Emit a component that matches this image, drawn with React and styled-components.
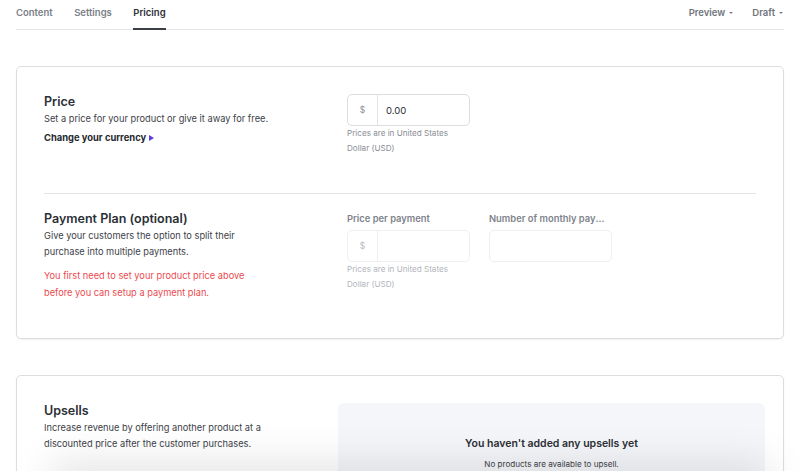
import React from "react";
import styled, { createGlobalStyle } from "styled-components";

const Global = createGlobalStyle`
  html, body { margin: 0; padding: 0; background: #fff; }
  body { font-family: Inter, "Noto Sans", Arial, sans-serif; color: #2b2f36; -webkit-font-smoothing: antialiased; }
  * { box-sizing: border-box; }
`;

const Page = styled.div`
  padding: 0 16px 60px;
`;

const TopBar = styled.div`
  display: flex;
  justify-content: space-between;
  align-items: stretch;
  height: 30px;
  border-bottom: 1px solid #e4e5e8;
`;

const Tabs = styled.div`
  display: flex;
  gap: 21.5px;
`;

const Tab = styled.div`
  font-size: 9.5px;
  font-weight: 600;
  color: ${(p) => (p.$active ? "#2b2f36" : "#7b8089")};
  padding-top: 7px;
  border-bottom: 2px solid ${(p) => (p.$active ? "#3a3e45" : "transparent")};
  margin-bottom: -1px;
`;

const Menus = styled.div`
  display: flex;
  gap: 19px;
  padding-right: 1px;
`;

const Menu = styled.div`
  display: flex;
  align-items: flex-start;
  gap: 4px;
  font-size: 9.5px;
  font-weight: 600;
  color: #6f747d;
  padding-top: 7px;
`;

const Caret = styled.span`
  width: 0;
  height: 0;
  margin-top: 5px;
  border-left: 2px solid transparent;
  border-right: 2px solid transparent;
  border-top: 2px solid #7b8089;
`;

const Card = styled.section`
  margin-top: ${(p) => p.$mt}px;
  border: 1px solid #dcdde1;
  border-radius: 5px;
  box-shadow: 0 1px 2px rgba(0, 0, 0, 0.06);
  padding: 0 27px;
  background: #fff;
`;

const Section = styled.div`
  display: grid;
  grid-template-columns: 230px 1fr;
  column-gap: 73px;
  padding: ${(p) => p.$pad};
  border-bottom: ${(p) => (p.$divider ? "1px solid #e4e5e8" : "none")};
`;

const Left = styled.div`
  display: flex;
  flex-direction: column;
  max-width: ${(p) => p.$max || 230}px;
`;

const Fields = styled.div`
  display: flex;
  gap: 19px;
  align-items: flex-start;
`;

const Heading = styled.h2`
  margin: 0;
  font-size: 12.5px;
  font-weight: 600;
  line-height: 16px;
  color: #2b2f36;
`;

const Desc = styled.p`
  margin: 1px 0 0;
  font-size: 9.25px;
  line-height: 16px;
  color: #3d4148;
  white-space: ${(p) => (p.$nowrap ? "nowrap" : "normal")};
`;

const Warning = styled.p`
  margin: 8px 0 0;
  font-size: 9.25px;
  line-height: 16.5px;
  color: #ec4a4f;
`;

const CurrencyLink = styled.a`
  margin-top: 4px;
  display: flex;
  align-items: center;
  gap: 3px;
  font-size: 9.4px;
  font-weight: 700;
  line-height: 14px;
  color: #25282e;
`;

const Tri = styled.span`
  width: 0;
  height: 0;
  border-top: 3.5px solid transparent;
  border-bottom: 3.5px solid transparent;
  border-left: 5px solid #5b3de0;
`;

const Field = styled.div`
  display: flex;
  flex-direction: column;
  width: 123px;
`;

const Label = styled.div`
  font-size: 9.4px;
  font-weight: 600;
  color: #7e838b;
  line-height: 16px;
  margin-bottom: 3px;
  white-space: nowrap;
  overflow: hidden;
  text-overflow: ellipsis;
`;

const InputBox = styled.div`
  display: flex;
  height: 32px;
  width: 123px;
  border: 1px solid ${(p) => (p.$disabled ? "#eeeff1" : "#dcdde1")};
  border-radius: 5px;
  background: #fff;
  overflow: hidden;
`;

const Prefix = styled.div`
  width: 30px;
  display: flex;
  align-items: center;
  justify-content: center;
  border-right: 1px solid ${(p) => (p.$disabled ? "#eeeff1" : "#e2e3e6")};
  font-size: 8.5px;
  color: ${(p) => (p.$disabled ? "#b8bbc1" : "#8a8e95")};
`;

const Value = styled.div`
  display: flex;
  align-items: center;
  padding-left: 8px;
  font-size: 9.5px;
  color: #2b2f36;
`;

const Help = styled.div`
  margin-top: 0px;
  font-size: 8.1px;
  line-height: 15px;
  color: ${(p) => (p.$disabled ? "#b3b6bc" : "#8a8e95")};
  width: 118px;
`;

const UpsellGrid = styled.div`
  display: grid;
  grid-template-columns: 230px 1fr;
  column-gap: 64px;
  padding: 27px 0 40px;
  margin-right: -9px;
`;

const Empty = styled.div`
  background: #f5f6f9;
  border-radius: 6px;
  height: 120px;
  display: flex;
  flex-direction: column;
  align-items: center;
  padding-top: 34px;
`;

const EmptyTitle = styled.div`
  font-size: 10.5px;
  font-weight: 600;
  color: #2b2f36;
  line-height: 14px;
`;

const EmptyText = styled.div`
  margin-top: 7px;
  font-size: 8.1px;
  color: #3d4148;
  line-height: 12px;
`;

const BottomShade = styled.div`
  position: fixed;
  left: 60px;
  right: 40px;
  bottom: -40px;
  height: 40px;
  background: #fff;
  box-shadow: 0 0 40px 10px rgba(0, 0, 0, 0.1);
`;

export default function App() {
  return (
    <>
      <Global />
      <Page>
        <TopBar>
          <Tabs>
            <Tab>Content</Tab>
            <Tab>Settings</Tab>
            <Tab $active>Pricing</Tab>
          </Tabs>
          <Menus>
            <Menu>Preview <Caret /></Menu>
            <Menu>Draft <Caret /></Menu>
          </Menus>
        </TopBar>

        <Card $mt={36}>
          <Section $pad="27px 0 37px" $divider>
            <Left>
              <Heading>Price</Heading>
              <Desc $nowrap>Set a price for your product or give it away for free.</Desc>
              <CurrencyLink>Change your currency <Tri /></CurrencyLink>
            </Left>
            <Fields>
              <Field>
                <InputBox>
                  <Prefix>$</Prefix>
                  <Value>0.00</Value>
                </InputBox>
                <Help>Prices are in United States Dollar (USD)</Help>
              </Field>
            </Fields>
          </Section>
          <Section $pad="17px 0 37px">
            <Left $max={224}>
              <Heading>Payment Plan (optional)</Heading>
              <Desc>Give your customers the option to split their purchase into multiple payments.</Desc>
              <Warning>You first need to set your product price above before you can setup a payment plan.</Warning>
            </Left>
            <Fields>
              <Field>
                <Label>Price per payment</Label>
                <InputBox $disabled>
                  <Prefix $disabled>$</Prefix>
                </InputBox>
                <Help $disabled>Prices are in United States Dollar (USD)</Help>
              </Field>
              <Field>
                <Label>Number of monthly payments</Label>
                <InputBox $disabled />
              </Field>
            </Fields>
          </Section>
        </Card>

        <Card $mt={36}>
          <UpsellGrid>
            <Left $max={224}>
              <Heading>Upsells</Heading>
              <Desc>Increase revenue by offering another product at a discounted price after the customer purchases.</Desc>
            </Left>
            <Empty>
              <EmptyTitle>You haven't added any upsells yet</EmptyTitle>
              <EmptyText>No products are available to upsell.</EmptyText>
            </Empty>
          </UpsellGrid>
        </Card>
      </Page>
      <BottomShade />
    </>
  );
}
